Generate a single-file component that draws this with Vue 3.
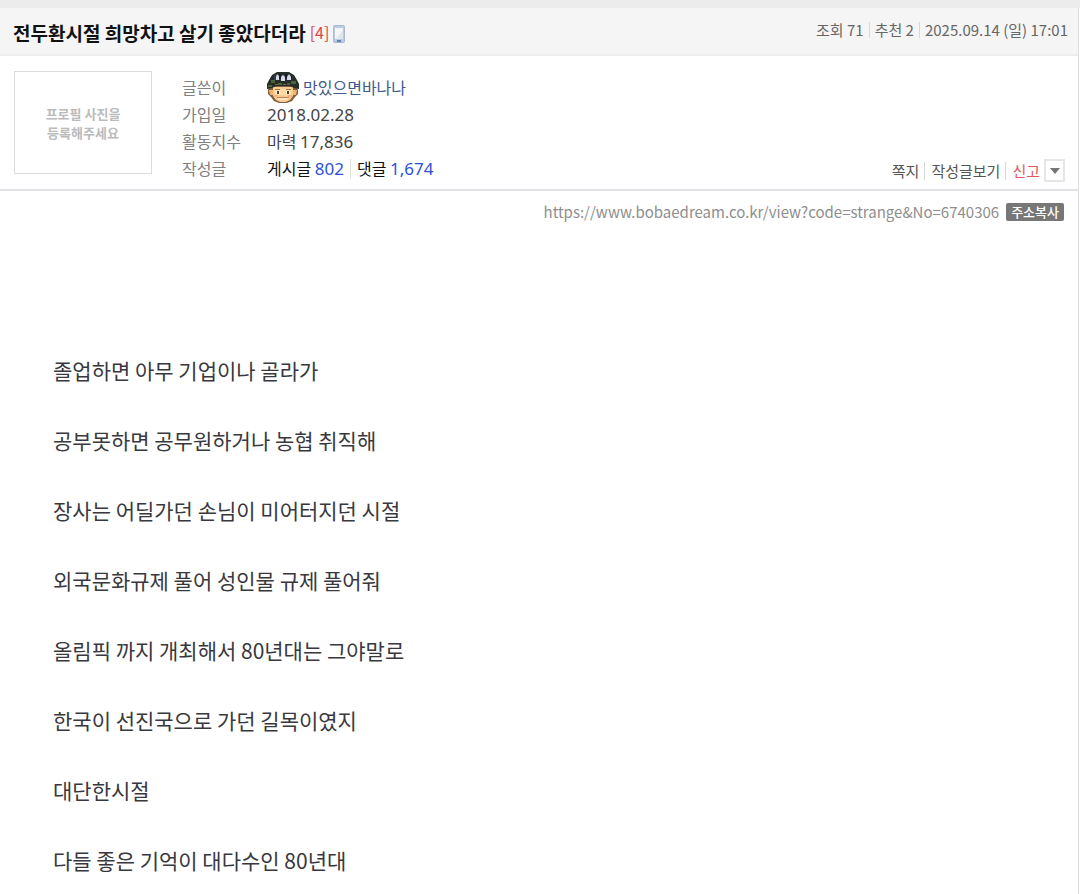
<script setup>
import { ref } from 'vue'

const address = 'https://www.bobaedream.co.kr/view?code=strange&No=6740306'
const menuOpen = ref(false)
const stats = ['조회 71', '추천 2', '2025.09.14 (일) 17:01']
const lines = [
  '졸업하면 아무 기업이나 골라가',
  '공부못하면 공무원하거나 농협 취직해',
  '장사는 어딜가던 손님이 미어터지던 시절',
  '외국문화규제 풀어 성인물 규제 풀어줘',
  '올림픽 까지 개최해서 80년대는 그야말로',
  '한국이 선진국으로 가던 길목이였지',
  '대단한시절',
  '다들 좋은 기억이 대다수인 80년대',
]
const copyAddress = () => navigator.clipboard?.writeText(address)
</script>

<template>
  <main class="post">
    <div class="strip"></div>
    <div class="frame">
      <header class="head">
        <h1 class="title">전두환시절 희망차고 살기 좋았다더라</h1>
        <a class="replies" href="#comments">[4]</a>
        <svg class="phone" viewBox="0 0 12 18" width="12" height="18" aria-hidden="true">
          <rect width="12" height="18" rx="2" fill="#a9b9d3" />
          <rect x="1" y="1" width="10" height="16" rx="1" fill="#bccbe0" />
          <rect x="2" y="3" width="8" height="11" fill="#f3f5f7" />
          <path d="M10 5v9H3z" fill="#e1e5ea" />
          <rect x="4" y="15" width="4" height="2" fill="#6480b4" />
        </svg>
        <ul class="stats">
          <li v-for="s in stats" :key="s">{{ s }}</li>
        </ul>
      </header>

      <section class="profile">
        <div class="photo"><span>프로필 사진을<br />등록해주세요</span></div>
        <dl class="info">
          <dt>글쓴이</dt>
          <dd class="writer">
            <svg class="avatar" viewBox="0 0 32 32" width="32" height="32" aria-hidden="true">
              <path d="M2 14h28l1 4v4l-3 3-3 4-5 2h-8l-5-2-3-4-3-3v-4z" fill="#80603a" />
              <path d="M2 18h4v5H3zM26 18h4l-1 5h-3z" fill="#eeb473" />
              <path d="M6 15h20v9l-3 4-4 2h-6l-4-2-3-4z" fill="#f8cd94" />
              <path d="M8 17h16v6H8z" fill="#fbdba6" />
              <path d="M8 17h5v1H8zM19 17h5v1h-5z" fill="#a57243" />
              <path d="M9 19h4v3H9zM19 19h4v3h-4z" fill="#fff0d8" />
              <path d="M10 19h2v3h-2zM20 19h2v3h-2z" fill="#5b3a28" />
              <path d="M7 23h4v2H7zM21 23h4v2h-4z" fill="#f5b184" />
              <path d="M10 25h12v1H10z" fill="#c9824f" />
              <path d="M11 26h10v2H11z" fill="#fae3be" />
              <path d="M10 0h12l5 3 3 5 2 4v5l-5-1-4-2H9l-4 2-5 1v-5l2-4 3-5z" fill="#242d27" />
              <path d="M4 8h4v3H4zM24 9h5v3h-5zM11 11h4v2h-4zM20 11h3v2h-3zM1 13h4v2H1z" fill="#4c6338" />
              <path d="M7 3h17v5H7z" fill="#333c56" />
              <path d="M10 2l2 2v4H9V5zM16 3l2 2v4h-4V5zM22 2l2 3v3h-4V5z" fill="#d5d9e6" />
              <path d="M12 2h2v5h-2zM18 2h2v5h-2z" fill="#1a1d27" />
              <path d="M8 12h3v1H8zM16 12h3v1h-3z" fill="#85613b" />
            </svg>
            <a href="#writer">맛있으면바나나</a>
          </dd>
          <dt>가입일</dt>
          <dd><span class="num">2018.02.28</span></dd>
          <dt>활동지수</dt>
          <dd>마력 <span class="num">17,836</span></dd>
          <dt>작성글</dt>
          <dd class="counts">
            <span>게시글 <a class="num" href="#posts">802</a></span>
            <span>댓글 <a class="num" href="#replies">1,674</a></span>
          </dd>
        </dl>
        <nav class="actions">
          <a href="#note">쪽지</a>
          <a href="#posts">작성글보기</a>
          <a class="report" href="#report">신고</a>
          <button class="more" type="button" aria-label="더보기" :aria-expanded="menuOpen" @click="menuOpen = !menuOpen">
            <svg viewBox="0 0 10 6" width="10" height="6" aria-hidden="true">
              <path d="M0 0h10L5 6z" fill="#757575" />
            </svg>
          </button>
        </nav>
      </section>

      <div class="address">
        <a :href="address">{{ address }}</a>
        <button class="copy" type="button" @click="copyAddress">주소복사</button>
      </div>

      <article class="content">
        <p v-for="line in lines" :key="line">{{ line }}</p>
      </article>
    </div>
  </main>
</template>

<style>
body {
  margin: 0;
  background: #fff;
}
</style>

<style scoped>
.post {
  font-family: "Noto Sans CJK KR", "Noto Sans", sans-serif;
  font-size: 16px;
  line-height: 27px;
  color: #444;
}
a {
  color: inherit;
  text-decoration: none;
}
button {
  font-family: inherit;
  cursor: pointer;
}
.strip {
  height: 8px;
  background: #ececec;
}
.frame {
  margin-right: 1px;
  border-right: 1px solid #dedede;
}
.head {
  display: flex;
  align-items: center;
  height: 46px;
  padding: 0 10px 0 13px;
  background: #f5f5f5;
  border-bottom: 2px solid #eee;
}
.title {
  margin: 2px 0 0;
  font-size: 19px;
  font-weight: 700;
  color: #111;
}
.replies {
  margin: 2px 4px 0;
  color: #d9464a;
}
.phone {
  margin-top: 6px;
}
.stats {
  display: flex;
  margin: 0 0 2px auto;
  padding: 0;
  list-style: none;
  font-size: 15px;
  line-height: 16px;
  color: #666;
}
.stats li + li {
  margin-left: 5px;
  padding-left: 5px;
  border-left: 1px solid #d8d8d8;
}
.profile {
  display: flex;
  align-items: flex-start;
  padding: 15px 13px 7px 14px;
  border-bottom: 2px solid #e1e1e8;
}
.photo {
  display: flex;
  align-items: center;
  justify-content: center;
  box-sizing: border-box;
  width: 138px;
  height: 103px;
  border: 1px solid #dcdcdc;
  font-size: 13px;
  font-weight: 700;
  line-height: 19px;
  text-align: center;
  color: #bbb;
}
.info {
  display: grid;
  grid-template-columns: 85px auto;
  grid-auto-rows: 27px;
  margin: 3px 0 0 30px;
}
.info dt {
  color: #808080;
}
.info dd {
  margin: 0;
}
.num {
  font-family: "Noto Sans", sans-serif;
  font-size: 17px;
}
.writer {
  display: flex;
  align-items: center;
  gap: 4px;
  color: #41598d;
}
.counts {
  display: flex;
  align-items: center;
  color: #111;
}
.counts a {
  color: #2c52dc;
}
.counts span {
  line-height: 18px;
}
.counts span + span {
  margin-left: 6px;
  padding-left: 6px;
  border-left: 1px solid #ddd;
}
.actions {
  display: flex;
  align-items: center;
  align-self: flex-end;
  margin-left: auto;
  font-size: 15px;
  line-height: 18px;
  color: #555;
}
.actions a + a {
  margin-left: 5px;
  padding-left: 6px;
  border-left: 1px solid #d8d8d8;
}
.actions .report {
  color: #dc5a5d;
}
.more {
  display: flex;
  align-items: center;
  justify-content: center;
  width: 21px;
  height: 23px;
  margin-left: 4px;
  padding: 0;
  border: 2px solid #e6e6e6;
  background: #fff;
}
.address {
  display: flex;
  align-items: center;
  justify-content: flex-end;
  gap: 7px;
  padding: 7px 14px 0 0;
  font-size: 15px;
  color: #8e8e8e;
}
.copy {
  height: 18px;
  padding: 0 5px;
  border: 0;
  border-radius: 2px;
  background: #777;
  font-size: 13px;
  font-weight: 500;
  line-height: 18px;
  color: #fff;
}
.content {
  padding: 110px 53px 0;
  font-size: 21px;
  line-height: 70px;
  color: #38383e;
}
.content p {
  margin: 0;
}
</style>
